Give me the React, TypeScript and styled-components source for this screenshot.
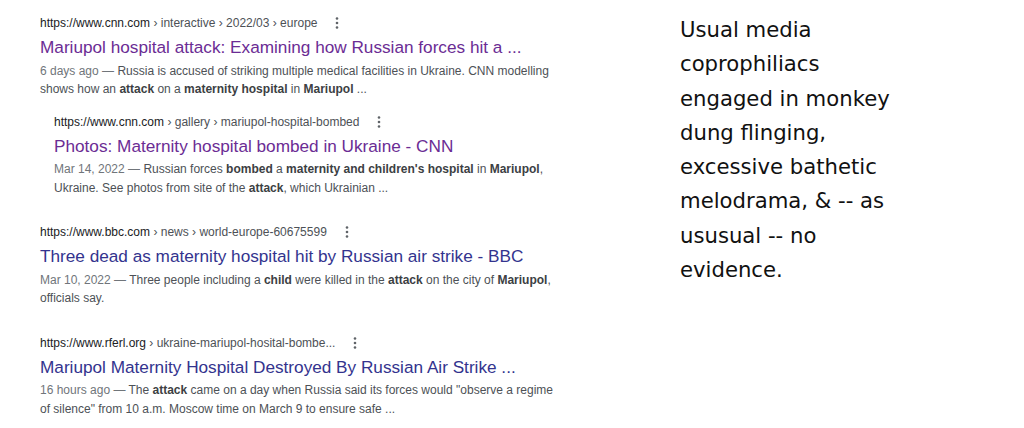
import React from "react";
import styled, { createGlobalStyle } from "styled-components";

const Global = createGlobalStyle`
  html, body { margin: 0; padding: 0; background: #ffffff; }
  body { width: 1024px; height: 428px; overflow: hidden; }
`;

const Page = styled.div`
  display: flex;
  width: 1024px;
  height: 428px;
  box-sizing: border-box;
  padding: 15px 0 0 40px;
`;

const Results = styled.div`
  width: 600px;
  display: flex;
  flex-direction: column;
  font-family: "Liberation Sans", Arial, sans-serif;
`;

const Result = styled.div<{ $nested?: boolean; $gap?: number }>`
  padding-left: ${(p) => (p.$nested ? 14 : 0)}px;
  margin-top: ${(p) => p.$gap ?? 0}px;
`;

const UrlRow = styled.div`
  display: flex;
  align-items: center;
  font-size: 12px;
  line-height: 16px;
  color: #202124;
  white-space: nowrap;
`;

const Crumbs = styled.span`
  color: #4d5156;
`;

const Kebab = styled.span`
  margin-left: 18px;
  display: inline-flex;
  align-items: center;
`;

const Title = styled.div<{ $visited?: boolean }>`
  font-size: 17.2px;
  line-height: 22px;
  margin-top: 5px;
  color: ${(p) => (p.$visited ? "#6b2c94" : "#33338e")};
  white-space: nowrap;
`;

const Snippet = styled.div`
  font-size: 12px;
  line-height: 18.5px;
  color: #4d5156;
  margin-top: 3.5px;
  white-space: nowrap;
  b {
    color: #3c4043;
    font-weight: bold;
  }
`;

const Date = styled.span`
  color: #70757a;
`;

const Comment = styled.div`
  margin-left: 40px;
  margin-top: -2px;
  font-family: "Comic Sans MS", "DejaVu Sans", sans-serif;
  font-size: 21.2px;
  line-height: 34.3px;
  color: #111111;
  white-space: nowrap;
`;

const Dots = () => (
  <svg width="4" height="12" viewBox="0 0 4 12">
    <circle cx="2" cy="1.5" r="1.3" fill="#5f6368" />
    <circle cx="2" cy="6" r="1.3" fill="#5f6368" />
    <circle cx="2" cy="10.5" r="1.3" fill="#5f6368" />
  </svg>
);

export default function App() {
  return (
    <>
      <Global />
      <Page>
        <Results>
          <Result>
            <UrlRow>
              https://www.cnn.com<Crumbs>&nbsp;› interactive › 2022/03 › europe</Crumbs>
              <Kebab><Dots /></Kebab>
            </UrlRow>
            <Title $visited>Mariupol hospital attack: Examining how Russian forces hit a ...</Title>
            <Snippet>
              <Date>6 days ago — </Date>Russia is accused of striking multiple medical facilities in Ukraine. CNN modelling
              <br />
              shows how an <b>attack</b> on a <b>maternity hospital</b> in <b>Mariupol</b> ...
            </Snippet>
          </Result>
          <Result $nested $gap={15}>
            <UrlRow>
              https://www.cnn.com<Crumbs>&nbsp;› gallery › mariupol-hospital-bombed</Crumbs>
              <Kebab><Dots /></Kebab>
            </UrlRow>
            <Title $visited>Photos: Maternity hospital bombed in Ukraine - CNN</Title>
            <Snippet>
              <Date>Mar 14, 2022 — </Date>Russian forces <b>bombed</b> a <b>maternity and children's hospital</b> in <b>Mariupol</b>,
              <br />
              Ukraine. See photos from site of the <b>attack</b>, which Ukrainian ...
            </Snippet>
          </Result>
          <Result $gap={27}>
            <UrlRow>
              https://www.bbc.com<Crumbs>&nbsp;› news › world-europe-60675599</Crumbs>
              <Kebab><Dots /></Kebab>
            </UrlRow>
            <Title>Three dead as maternity hospital hit by Russian air strike - BBC</Title>
            <Snippet>
              <Date>Mar 10, 2022 — </Date>Three people including a <b>child</b> were killed in the <b>attack</b> on the city of <b>Mariupol</b>,
              <br />
              officials say.
            </Snippet>
          </Result>
          <Result $gap={27}>
            <UrlRow>
              https://www.rferl.org<Crumbs>&nbsp;› ukraine-mariupol-hosital-bombe...</Crumbs>
              <Kebab><Dots /></Kebab>
            </UrlRow>
            <Title>Mariupol Maternity Hospital Destroyed By Russian Air Strike ...</Title>
            <Snippet>
              <Date>16 hours ago — </Date>The <b>attack</b> came on a day when Russia said its forces would "observe a regime
              <br />
              of silence" from 10 a.m. Moscow time on March 9 to ensure safe ...
            </Snippet>
          </Result>
        </Results>
        <Comment>
          Usual media
          <br />
          coprophiliacs
          <br />
          engaged in monkey
          <br />
          dung flinging,
          <br />
          excessive bathetic
          <br />
          melodrama, &amp; -- as
          <br />
          ususual -- no
          <br />
          evidence.
        </Comment>
      </Page>
    </>
  );
}
